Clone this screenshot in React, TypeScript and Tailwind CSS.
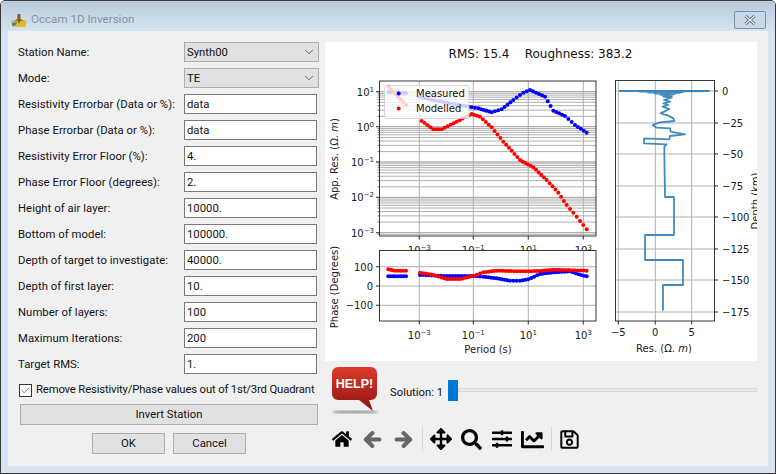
import React from "react";
import { FaHome, FaArrowLeft, FaArrowRight, FaArrowsAlt, FaSearch, FaSlidersH, FaChartLine, FaRegSave } from "react-icons/fa";
import { ChevronDown, Check } from "lucide-react";

type P = [number, number];
function sample(pts: P[], step: number): P[] {
  const out: P[] = [];
  for (let i = 0; i < pts.length - 1; i++) {
    const [x0, y0] = pts[i], [x1, y1] = pts[i + 1];
    const n = Math.max(1, Math.round((x1 - x0) / step));
    for (let k = 0; k < n; k++) out.push([x0 + ((x1 - x0) * k) / n, y0 + ((y1 - y0) * k) / n]);
  }
  out.push(pts[pts.length - 1]);
  return out;
}
// coordinates read from 3x crops
const topPt = (p: P): P => [320 + p[0] / 3, 40 + p[1] / 3];
const lowPt = (p: P): P => [320 + p[0] / 3, 230 + p[1] / 3];

const blueTop = [
  ...sample(([[205, 155], [258, 160]] as P[]).map(topPt), 2.5),
  ...sample(([[300, 172], [380, 188], [455, 202], [475, 205], [515, 217], [545, 208], [580, 180], [610, 158], [630, 150], [675, 170], [700, 212], [735, 228], [765, 255], [800, 278]] as P[]).map(topPt), 2.9),
];
const redTop = [
  ...sample(([[205, 140], [258, 195]] as P[]).map(topPt), 2.5),
  ...sample(([[305, 243], [340, 268], [365, 268], [410, 245], [455, 222], [480, 230], [515, 262], [550, 305], [600, 360], [640, 382], [680, 420], [715, 458], [740, 495], [770, 530], [800, 568]] as P[]).map(topPt), 2.9),
];
const blueLow = [
  ...sample(([[205, 139], [258, 139]] as P[]).map(lowPt), 2.5),
  ...sample(([[300, 135], [380, 138], [460, 138], [490, 140], [530, 145], [570, 152], [600, 152], [625, 148], [660, 132], [700, 127], [750, 124], [775, 133], [800, 139]] as P[]).map(lowPt), 2.9),
];
const redLow = [
  ...sample(([[205, 118], [225, 122], [258, 122]] as P[]).map(lowPt), 2.5),
  ...sample(([[300, 128], [340, 135], [380, 147], [420, 147], [460, 138], [490, 127], [530, 122], [600, 124], [660, 123], [700, 119], [800, 122]] as P[]).map(lowPt), 2.9),
];

const z8: P[] = ([[85, 30], [70, 35], [95, 38], [72, 45], [90, 50], [70, 55], [85, 60], [68, 65], [88, 72], [62, 85], [85, 92], [100, 100], [103, 108], [60, 112], [38, 120], [50, 128], [90, 130], [92, 140], [135, 148], [90, 153], [88, 163], [12, 160], [12, 175], [80, 178], [73, 185], [73, 210]] as P[]).map((p) => [640 + p[0] / 3, 85 + p[1] / 3] as P);
const depthTop: P[] = [[619, 91], [709, 91], [640, 91.5], [683, 92], [648, 92.5], [680, 93], [655, 93.5], [675, 94], [660, 94.5], [672, 96], [663, 96], [670, 98], [664, 95]];
const depthLow: P[] = [[665, 197], [674, 197], [674, 235], [645, 235], [645, 260], [683, 260], [683, 285], [663, 285], [663, 310.5]];
const depth = [...depthTop, ...z8, ...depthLow].map((p) => p.join(",")).join(" ");

const xDec = [419.3, 473.3, 528.3, 583.3];
const xExp = ["−3", "−1", "1", "3"];
const yDec = [91.7, 126.7, 162, 197.3, 232.7];
const yExp = ["1", "0", "−1", "−2", "−3"];
const minorLogs = [2, 3, 4, 5, 6, 7, 8, 9].map((n) => Math.log10(n));
const yMinor: number[] = [];
for (let d = 0; d <= 4; d++) for (const m of minorLogs) {
  const y = 232.7 + 35.25 - (d + m) * 35.25;
  if (y > 81 && y < 236) yMinor.push(y);
}
const lowY = [266.7, 286, 305.3];
const depthY = [91, 123, 154, 186, 217, 249, 280, 312];
const depthLabels = ["0", "−25", "−50", "−75", "−100", "−125", "−150", "−175"];
const resX = [618.3, 655.3, 691.7];
const grid = "#b0b0b0";

function Sci({ x, y, exp }: { x: number; y: number; exp: string }) {
  return (
    <text x={x} y={y} textAnchor="middle" fontSize={10} fill="#1a1a1a">
      10<tspan dy={-4} fontSize={7}>{exp}</tspan>
    </text>
  );
}
function SciRight({ x, y, exp }: { x: number; y: number; exp: string }) {
  return (
    <text x={x} y={y} textAnchor="end" fontSize={10} fill="#1a1a1a">
      10<tspan dy={-4} fontSize={7}>{exp}</tspan>
    </text>
  );
}
function Dots({ pts, fill }: { pts: P[]; fill: string }) {
  return <>{pts.map((p, i) => <circle key={i} cx={p[0]} cy={p[1]} r={2} fill={fill} />)}</>;
}

function Figure() {
  return (
    <svg viewBox="325 42 432 319" width={432} height={319} className="block bg-white font-['DejaVu_Sans',sans-serif]">
      <text x={540.5} y={58} textAnchor="middle" fontSize={12} fill="#111" style={{ whiteSpace: "pre" }}>RMS: 15.4    Roughness: 383.2</text>

      {/* resistivity */}
      {yMinor.map((y, i) => <line key={i} x1={379.5} x2={596} y1={y} y2={y} stroke={grid} strokeWidth={1} />)}
      {yMinor.map((y, i) => <line key={i} x1={377.5} x2={379.5} y1={y} y2={y} stroke="#222" strokeWidth={0.6} />)}
      {yDec.map((y, i) => <line key={i} x1={376} x2={596} y1={y} y2={y} stroke={grid} strokeWidth={1.3} />)}
      {xDec.map((x, i) => <line key={i} x1={x} x2={x} y1={81} y2={239.5} stroke={grid} strokeWidth={1} />)}
      {xDec.map((x, i) => <line key={i} x1={x} x2={x} y1={236} y2={239.5} stroke="#222" strokeWidth={0.8} />)}
      {yDec.map((y, i) => <line key={i} x1={376} x2={379.5} y1={y} y2={y} stroke="#222" strokeWidth={0.8} />)}
      <Dots pts={blueTop} fill="#0000ff" />
      <Dots pts={redTop} fill="#ff0000" />
      <rect x={384.5} y={85.5} width={84.5} height={33} rx={2} fill="#ffffff" fillOpacity={0.8} stroke="#cccccc" strokeOpacity={0.8} />
      <circle cx={398.7} cy={93.5} r={2} fill="#0000ff" />
      <circle cx={398.7} cy={108.5} r={2} fill="#ff0000" />
      <text x={416} y={97} fontSize={10} fill="#111">Measured</text>
      <text x={416} y={112} fontSize={10} fill="#111">Modelled</text>
      <rect x={379.5} y={81} width={216.5} height={155} fill="none" stroke="#222" strokeWidth={0.9} />
      {yDec.map((y, i) => <SciRight key={i} x={374} y={y + 4} exp={yExp[i]} />)}
      {xDec.map((x, i) => <Sci key={i} x={x} y={254} exp={xExp[i]} />)}
      <text transform="translate(338 159) rotate(-90)" textAnchor="middle" fontSize={10} fill="#1a1a1a">App. Res. (Ω. <tspan fontStyle="italic">m</tspan>)</text>

      {/* phase */}
      <rect x={379.5} y={250.5} width={216.5} height={70.5} fill="#fff" />
      {lowY.map((y, i) => <line key={i} x1={376} x2={596} y1={y} y2={y} stroke={grid} strokeWidth={1} />)}
      {xDec.map((x, i) => <line key={i} x1={x} x2={x} y1={250.5} y2={324.5} stroke={grid} strokeWidth={1} />)}
      {xDec.map((x, i) => <line key={i} x1={x} x2={x} y1={321} y2={324.5} stroke="#222" strokeWidth={0.8} />)}
      {lowY.map((y, i) => <line key={i} x1={376} x2={379.5} y1={y} y2={y} stroke="#222" strokeWidth={0.8} />)}
      <Dots pts={blueLow} fill="#0000ff" />
      <Dots pts={redLow} fill="#ff0000" />
      <rect x={379.5} y={250.5} width={216.5} height={70.5} fill="none" stroke="#222" strokeWidth={0.9} />
      {["100", "0", "−100"].map((t, i) => <text key={i} x={373} y={lowY[i] + 4} textAnchor="end" fontSize={10} fill="#1a1a1a">{t}</text>)}
      {xDec.map((x, i) => <Sci key={i} x={x} y={339} exp={xExp[i]} />)}
      <text x={488} y={353} textAnchor="middle" fontSize={10} fill="#1a1a1a">Period (s)</text>
      <text transform="translate(338 287) rotate(-90)" textAnchor="middle" fontSize={10} fill="#1a1a1a">Phase (Degrees)</text>

      {/* model */}
      {depthY.map((y, i) => <line key={i} x1={615.5} x2={718} y1={y} y2={y} stroke={grid} strokeWidth={1} />)}
      {resX.map((x, i) => <line key={i} x1={x} x2={x} y1={80.5} y2={324.5} stroke={grid} strokeWidth={1} />)}
      {depthY.map((y, i) => <line key={i} x1={714.5} x2={718} y1={y} y2={y} stroke="#222" strokeWidth={0.8} />)}
      {resX.map((x, i) => <line key={i} x1={x} x2={x} y1={321} y2={324.5} stroke="#222" strokeWidth={0.8} />)}
      <polyline points={depth} fill="none" stroke="#1f77b4" strokeOpacity={0.85} strokeWidth={1.8} strokeLinejoin="round" />
      <rect x={615.5} y={80.5} width={99} height={240.5} fill="none" stroke="#222" strokeWidth={0.9} />
      {depthLabels.map((t, i) => <text key={i} x={722} y={depthY[i] + 4} fontSize={10} fill="#1a1a1a">{t}</text>)}
      {["−5", "0", "5"].map((t, i) => <text key={i} x={resX[i]} y={336} textAnchor="middle" fontSize={10} fill="#1a1a1a">{t}</text>)}
      <text x={664} y={352} textAnchor="middle" fontSize={10} fill="#1a1a1a">Res. (Ω. <tspan fontStyle="italic">m</tspan>)</text>
      <text transform="translate(759 201) rotate(-90)" textAnchor="middle" fontSize={10} fill="#1a1a1a">Depth (km)</text>
    </svg>
  );
}

const rows: [string, string][] = [
  ["Resistivity Errorbar (Data or %):", "data"],
  ["Phase Errorbar (Data or %):", "data"],
  ["Resistivity Error Floor (%):", "4."],
  ["Phase Error Floor (degrees):", "2."],
  ["Height of air layer:", "10000."],
  ["Bottom of model:", "100000."],
  ["Depth of target to investigate:", "40000."],
  ["Depth of first layer:", "10."],
  ["Number of layers:", "100"],
  ["Maximum Iterations:", "200"],
  ["Target RMS:", "1."],
];

function Combo({ label, value }: { label: string; value: string }) {
  return (
    <div className="flex h-5 items-center">
      <span className="w-[166px] pt-[2px]">{label}</span>
      <div className="flex h-5 w-[135px] items-center justify-between border border-[#adadad] bg-[#e1e1e1] pl-[2px] pr-[2px]">
        <span className="pt-[2px]">{value}</span>
        <ChevronDown size={14} strokeWidth={1.2} className="text-[#333]" />
      </div>
    </div>
  );
}

function HelpBubble() {
  return (
    <svg width={52} height={52} viewBox="0 0 52 52" className="block font-['Liberation_Sans',sans-serif]">
      <defs>
        <linearGradient id="hb" x1="0" y1="0" x2="0" y2="1">
          <stop offset="0" stopColor="#de3a2c" />
          <stop offset="1" stopColor="#8a1410" />
        </linearGradient>
        <filter id="bl"><feGaussianBlur stdDeviation="1" /></filter>
      </defs>
      <ellipse cx={24} cy={46} rx={23} ry={1.6} fill="#999" filter="url(#bl)" />
      <path d="M7 1H40a6 6 0 0 1 6 6V28a6 6 0 0 1-6 6H38L42 45L28 34H7a6 6 0 0 1-6-6V7a6 6 0 0 1 6-6Z" fill="url(#hb)" />
      <text x={23.5} y={22} textAnchor="middle" fontSize={12.5} fontWeight={700} fill="#fff">HELP!</text>
    </svg>
  );
}

const toolBtn = "flex h-[26px] w-[30.5px] items-center justify-center";
const thick = { stroke: "currentColor", strokeWidth: 28 };

export default function App() {
  return (
    <div className="flex h-[474px] w-[776px] flex-col overflow-hidden rounded-t-[5px] border border-[#3c3c3c] bg-[#d6e4f1] font-['Roboto',sans-serif] text-[11.3px] text-[#111]">
      <div className="flex h-[30px] shrink-0 items-center bg-[linear-gradient(#b9cadb,#d6e4f1)] pl-[10px] pr-[9px] pt-[8px]">
        <svg width={16} height={16} viewBox="0 0 16 16" className="shrink-0">
          <path d="M0 9L8 7L16 9L14 15L2 15Z" fill="#e3b92d" />
          <path d="M1 11L6 10L5 13L1 14Z" fill="#3f7fb5" />
          <path d="M6.500 2.500a2 2 0 0 1 3 0L9.500 7L13 9L9.500 8.500L8 12L6.500 8.500L3 9L6.500 7Z" fill="#8a5a22" />
        </svg>
        <span className="ml-[4px] text-[11.6px] text-[#8b939a]">Occam 1D Inversion</span>
        <div className="ml-auto flex h-[18px] w-[32px] items-center justify-center rounded-[2px] border border-[#7f8fa3] bg-[#c9d8e8]">
          <svg width={12} height={10} viewBox="0 0 12 10">
            <path d="M1.500 1L10.500 9M10.500 1L1.500 9" stroke="#5a5f66" strokeWidth={3} />
            <path d="M1.500 1L10.500 9M10.500 1L1.500 9" stroke="#f2f4f6" strokeWidth={1.2} />
          </svg>
        </div>
      </div>

      <div className="ml-[7px] flex h-[435px] w-[760px] bg-[#f0f0f0]">
        <div className="w-[317px] shrink-0 pl-[10px] pt-[11px]">
          <div className="flex flex-col gap-[6px]">
            <Combo label="Station Name:" value="Synth00" />
            <Combo label="Mode:" value="TE" />
            {rows.map(([label, value]) => (
              <div key={label} className="flex h-5 items-center">
                <span className="w-[166px] whitespace-nowrap pt-[2px] tracking-[0.05px]">{label}</span>
                <div className="flex h-5 w-[133px] items-center border border-[#7a7a7a] bg-white pl-[2px] pt-[2px]">{value}</div>
              </div>
            ))}
          </div>
          <div className="mt-[9px] flex h-[14px] items-center pl-[1px]">
            <div className="flex h-[13px] w-[13px] items-center justify-center border border-[#333] bg-white">
              <Check size={11} strokeWidth={1.4} className="text-[#444]" />
            </div>
            <span className="ml-[4px] whitespace-nowrap tracking-[-0.15px]">Remove Resistivity/Phase values out of 1st/3rd Quadrant</span>
          </div>
          <div className="ml-[2px] mt-[7px] flex h-[21px] w-[298px] items-center justify-center border border-[#adadad] bg-[#e1e1e1] pt-[2px]">Invert Station</div>
          <div className="ml-[74px] mt-2 flex gap-2">
            <div className="flex h-[21px] w-[73px] items-center justify-center border border-[#adadad] bg-[#e1e1e1] pt-[2px]">OK</div>
            <div className="flex h-[21px] w-[73px] items-center justify-center border border-[#adadad] bg-[#e1e1e1] pt-[2px]">Cancel</div>
          </div>
        </div>

        <div className="w-[432px] shrink-0 pt-[11px]">
          <Figure />
          <div className="mt-[5px] flex h-[52px] items-start pl-[6px]">
            <HelpBubble />
            <span className="ml-[7px] mt-[19px] w-[58px] whitespace-nowrap">Solution: 1</span>
            <div className="mt-[14px] h-[21px] w-[10px] bg-[#0078d7]" />
            <div className="mt-[22px] h-[4px] w-[299px] border border-[#d6dcd9] bg-[#e6eaea]" />
          </div>
          <div className="mt-[8px] flex h-[26px] items-center pl-[2px]">
            <div className={toolBtn}><FaHome size={20} className="text-black" /></div>
            <div className={toolBtn}><FaArrowLeft size={19} className="text-[#666]" {...thick} /></div>
            <div className={toolBtn}><FaArrowRight size={19} className="text-[#666]" {...thick} /></div>
            <div className="ml-[3px] mr-[3px] h-[24px] w-px bg-[#d5d5d5]" />
            <div className={toolBtn}><FaArrowsAlt size={22} className="text-black" /></div>
            <div className={toolBtn}><FaSearch size={21} className="text-black" /></div>
            <div className={toolBtn}><FaSlidersH size={20} className="text-black" /></div>
            <div className={toolBtn}><FaChartLine size={23} className="text-black" /></div>
            <div className="ml-[3px] mr-[3px] h-[24px] w-px bg-[#d5d5d5]" />
            <div className={toolBtn}><FaRegSave size={21} className="text-black" /></div>
          </div>
        </div>
      </div>
    </div>
  );
}
